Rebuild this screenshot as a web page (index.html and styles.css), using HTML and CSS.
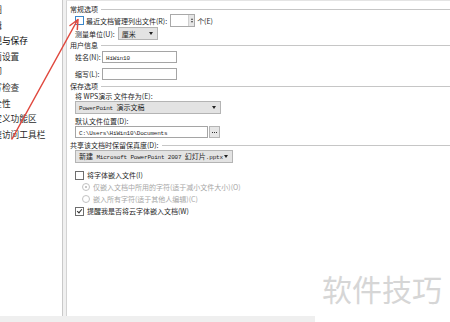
FILE: index.html
```html
<!DOCTYPE html>
<html lang="zh-CN">
<head>
    <meta charset="UTF-8">
    <meta name="viewport" content="width=device-width, initial-scale=1.0">
    <title>选项 - 常规与保存</title>
    <link rel="stylesheet" href="styles.css">
</head>
<body>
<div class="window">
    <div class="content">
        <nav class="sidebar">
            <div class="nav-item">视图</div>
            <div class="nav-item">编辑</div>
            <div class="nav-item active">常规与保存</div>
            <div class="nav-item">页面设置</div>
            <div class="nav-item">打印</div>
            <div class="nav-item">拼写检查</div>
            <div class="nav-item">安全性</div>
            <div class="nav-item">自定义功能区</div>
            <div class="nav-item">快速访问工具栏</div>
        </nav>
        <div class="gutter"></div>
        <main class="panel">
            <div class="group-title"><span>常规选项</span></div>
            <div class="row row-tall">
                <span class="check hover"></span>
                <span class="label">最近文档管理列出文件(R):</span>
                <span class="spin"><span class="spin-btn"><i class="up"></i><i class="down"></i></span></span>
                <span class="label">个(E)</span>
            </div>
            <div class="row row-tall">
                <span class="label">测量单位(U):</span>
                <span class="select select-unit">厘米<i class="caret"></i></span>
            </div>

            <div class="group-title"><span>用户信息</span></div>
            <div class="row row-tall">
                <span class="label field-label">姓名(N):</span>
                <span class="input input-name"><span class="latin">HiWin10</span></span>
            </div>
            <div class="row row-tall spaced-more">
                <span class="label field-label">缩写(L):</span>
                <span class="input input-name"></span>
            </div>

            <div class="group-title spaced-less"><span>保存选项</span></div>
            <div class="row">
                <span class="label">将 WPS演示 文件存为(E):</span>
            </div>
            <div class="row row-tall">
                <span class="select select-format"><span><span class="latin">PowerPoint </span>演示文稿</span><i class="caret"></i></span>
            </div>
            <div class="row spaced">
                <span class="label">默认文件位置(D):</span>
            </div>
            <div class="row row-field">
                <span class="input input-path"><span class="latin">C:\Users\HiWin10\Documents</span></span>
                <span class="browse"><i></i><i></i><i></i></span>
            </div>

            <div class="group-title spaced"><span>共享该文档时保留保真度(D):</span></div>
            <div class="row row-tall">
                <span class="select select-share"><span>新建<span class="latin"> Microsoft PowerPoint 2007 </span>幻灯片<span class="latin">.pptx</span></span><i class="caret"></i></span>
            </div>
            <div class="row row-option first-option">
                <span class="check"></span>
                <span class="label">将字体嵌入文件(I)</span>
            </div>
            <div class="row row-option sub disabled">
                <span class="radio checked"></span>
                <span class="label">仅嵌入文档中所用的字符(适于减小文件大小)(O)</span>
            </div>
            <div class="row row-option sub disabled">
                <span class="radio"></span>
                <span class="label">嵌入所有字符(适于其他人编辑)(C)</span>
            </div>
            <div class="row row-option">
                <span class="check checked"></span>
                <span class="label">提醒我是否将云字体嵌入文档(W)</span>
            </div>
        </main>
    </div>
    <div class="statusbar"></div>

    <div class="watermark">软件技巧</div>

    <svg class="annotation" width="450" height="322" viewBox="0 0 450 322">
        <line x1="12" y1="139" x2="77.5" y2="20" stroke="#e0483e" stroke-width="1.5" stroke-linecap="round"/>
        <polyline points="70,25.5 78,19.5 77.3,29.5" fill="none" stroke="#e0483e" stroke-width="1.5" stroke-linecap="round" stroke-linejoin="round"/>
    </svg>
</div>
</body>
</html>
```

FILE: styles.css
```css
html, body {
    margin: 0;
    padding: 0;
    background-color: #ffffff;
}
.window {
    position: relative;
    width: 450px;
    height: 322px;
    overflow: hidden;
    font-family: "Noto Sans CJK SC", "Liberation Sans", sans-serif;
    color: #1e1e1e;
}
.content {
    display: flex;
    height: 316px;
}
.statusbar {
    height: 6px;
    background-color: #efefef;
}

/* left navigation */
.sidebar {
    width: 62px;
    border-right: 1px solid #c9c9c9;
    background-color: #ffffff;
    padding-top: 2px;
    overflow: hidden;
}
.nav-item {
    height: 15.6px;
    line-height: 15.6px;
    margin-left: -15.5px;
    white-space: nowrap;
    font-size: 8.7px;
    color: #2a2a2a;
}
.nav-item.active {
    color: #000000;
}
.gutter {
    width: 3px;
    background-color: #f0f0f0;
}

/* right panel */
.panel {
    flex: 1;
    background-color: #ffffff;
    border-left: 1px solid #d3d3d3;
    border-top: 1px solid #e4e4e4;
    padding: 3px 0 0 3px;
    font-size: 7px;
}
.group-title {
    display: flex;
    align-items: center;
    height: 10px;
    line-height: 10px;
    white-space: nowrap;
}
.group-title::after {
    content: "";
    flex: 1;
    height: 1px;
    margin-left: 3px;
    background-color: #c6c6c6;
}
.row {
    display: flex;
    align-items: center;
    gap: 2px;
    height: 10px;
    line-height: 10px;
    margin-left: 5px;
    white-space: nowrap;
}
.row-tall {
    height: 13px;
}
.row-field {
    height: 12px;
    gap: 1px;
}
.row-option {
    height: 12px;
    gap: 3px;
}
.spaced {
    margin-top: 2px;
}
.spaced-more {
    margin-top: 4px;
}
.spaced-less {
    margin-top: 1px;
}
.first-option {
    margin-top: 6px;
}
.row.sub {
    margin-left: 12px;
}
.disabled {
    color: #a6a6a6;
}
.field-label {
    width: 25px;
}
.latin {
    font-family: "Liberation Mono", monospace;
    font-size: 6px;
    letter-spacing: -0.2px;
}

/* controls */
.check {
    position: relative;
    width: 7px;
    height: 7px;
    border: 1px solid #6e6e6e;
    background-color: #ffffff;
    flex-shrink: 0;
}
.check.hover {
    border-color: #3b86c8;
}
.check.checked::after {
    content: "";
    position: absolute;
    left: 2px;
    top: 0;
    width: 2px;
    height: 4px;
    border: solid #333333;
    border-width: 0 1px 1px 0;
    transform: rotate(40deg);
}
.radio {
    position: relative;
    width: 6px;
    height: 6px;
    border: 1px solid #c2c2c2;
    border-radius: 50%;
    flex-shrink: 0;
}
.radio.checked::after {
    content: "";
    position: absolute;
    left: 2px;
    top: 2px;
    width: 2px;
    height: 2px;
    border-radius: 50%;
    background-color: #b5b5b5;
}
.spin {
    display: flex;
    justify-content: flex-end;
    width: 23px;
    height: 11px;
    margin-left: 1px;
    border: 1px solid #a9a9a9;
    background-color: #ffffff;
}
.spin-btn {
    display: flex;
    flex-direction: column;
    justify-content: center;
    gap: 1px;
    width: 5px;
    background-color: #e6e6e6;
    border-left: 1px solid #d0d0d0;
}
.spin-btn i {
    display: block;
    margin: 0 auto;
    width: 0;
    height: 0;
    border-left: 1.5px solid transparent;
    border-right: 1.5px solid transparent;
}
.spin-btn .up {
    border-bottom: 2px solid #444444;
}
.spin-btn .down {
    border-top: 2px solid #444444;
}
.select {
    display: flex;
    align-items: center;
    justify-content: space-between;
    box-sizing: border-box;
    height: 13px;
    padding: 0 4px 0 3px;
    background-color: #e3e3e3;
    border: 1px solid #b4b4b4;
}
.select-unit {
    width: 40px;
    margin-left: 1px;
}
.select-format {
    width: 146px;
}
.select-share {
    width: 158px;
}
.caret {
    flex-shrink: 0;
    width: 0;
    height: 0;
    border-left: 2.5px solid transparent;
    border-right: 2.5px solid transparent;
    border-top: 3px solid #222222;
}
.input {
    box-sizing: border-box;
    height: 12px;
    line-height: 10px;
    padding: 0 3px;
    border: 1px solid #a5a5a5;
    background-color: #ffffff;
}
.input-name {
    width: 75px;
}
.input-path {
    width: 133px;
}
.browse {
    display: flex;
    align-items: center;
    justify-content: center;
    gap: 1px;
    box-sizing: border-box;
    width: 11px;
    height: 12px;
    border: 1px solid #b4b4b4;
    background-color: #e6e6e6;
}
.browse i {
    width: 1px;
    height: 1px;
    background-color: #333333;
}

/* overlays */
.watermark {
    position: absolute;
    left: 315px;
    top: 262px;
    width: 135px;
    height: 60px;
    padding: 9px 0 0 7px;
    box-sizing: border-box;
    background-color: #ffffff;
    font-size: 30px;
    line-height: 34px;
    color: #d6d6d6;
    white-space: nowrap;
}
.annotation {
    position: absolute;
    left: 0;
    top: 0;
    pointer-events: none;
}
```
